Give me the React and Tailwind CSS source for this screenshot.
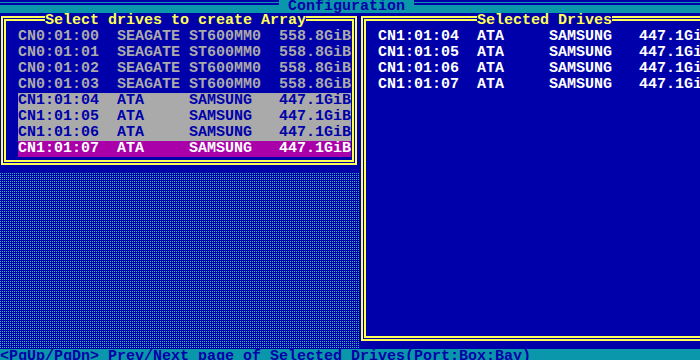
/**
 * App.jsx — RAID configuration screen (VGA text mode look).
 * 80x25 grid: every cell is 9px wide, 16px high.
 */
const arrayDrives = [
  { text: 'CN0:01:00  SEAGATE ST600MM0  558.8GiB', state: 'idle' },
  { text: 'CN0:01:01  SEAGATE ST600MM0  558.8GiB', state: 'idle' },
  { text: 'CN0:01:02  SEAGATE ST600MM0  558.8GiB', state: 'idle' },
  { text: 'CN0:01:03  SEAGATE ST600MM0  558.8GiB', state: 'idle' },
  { text: 'CN1:01:04  ATA     SAMSUNG   447.1GiB', state: 'picked' },
  { text: 'CN1:01:05  ATA     SAMSUNG   447.1GiB', state: 'picked' },
  { text: 'CN1:01:06  ATA     SAMSUNG   447.1GiB', state: 'picked' },
  { text: 'CN1:01:07  ATA     SAMSUNG   447.1GiB', state: 'cursor' },
]

const selected = [
  'CN1:01:04  ATA     SAMSUNG   447.1GiB',
  'CN1:01:05  ATA     SAMSUNG   447.1GiB',
  'CN1:01:06  ATA     SAMSUNG   447.1GiB',
  'CN1:01:07  ATA     SAMSUNG   447.1GiB',
]

const rowStyles = {
  idle: 'text-[#aaaaaa]',
  picked: 'bg-[#aaaaaa] text-[#0000aa]',
  cursor: 'bg-[#aa00aa] text-white',
}

export default function App() {
  return (
    <div className="w-[700px] h-[360px] overflow-hidden flex flex-col bg-[#0000aa] font-['Liberation_Mono',monospace] font-bold text-[15px] leading-[16px]">
      {/* title bar */}
      <header className="h-[13px] shrink-0 flex items-start bg-[#0a97ab]">
        <div className="w-[279px] shrink-0 h-0 border-t-[5px] border-double border-[#0000aa]" />
        <h1 className="px-[9px] h-[13px] leading-[14px] text-[#0000aa] whitespace-pre">Configuration</h1>
        <div className="flex-1 h-0 border-t-[5px] border-double border-[#0000aa]" />
      </header>

      <main className="flex-1 flex min-h-0">
        {/* drive picker + shaded backdrop */}
        <div className="w-[360px] shrink-0 flex flex-col">
          <section className="relative pt-[3px] pl-[1px] pr-[3px] pb-[8px] bg-[#0000aa]">
            <div className="border-[5px] border-double border-[#ffff55] pt-[8px] pb-[3px] pl-[12px] pr-[1px]">
              {arrayDrives.map((d) => (
                <div key={d.text} className={`h-[16px] whitespace-pre ${rowStyles[d.state]}`}>
                  {d.text}
                </div>
              ))}
            </div>
            <h2 className="absolute top-0 left-[45px] bg-[#0000aa] text-[#ffff55] whitespace-pre">
              Select drives to create Array
            </h2>
          </section>
          <div className="flex-1 bg-[#0000aa] bg-[conic-gradient(at_1px_1px,#0000aa_270deg,#2ab8b0_0)] bg-[length:2px_2px]" />
        </div>

        {/* selected drives */}
        <section className="relative w-[360px] shrink-0 flex flex-col pt-[3px] pl-[1px] pr-[3px] pb-[8px] bg-[#0000aa]">
          <div className="flex-1 border-[5px] border-double border-[#ffff55] pt-[8px] pl-[12px]">
            {selected.map((s) => (
              <div key={s} className="h-[16px] whitespace-pre text-white">
                {s}
              </div>
            ))}
          </div>
          <h2 className="absolute top-0 left-[117px] bg-[#0000aa] text-[#ffff55] whitespace-pre">
            Selected Drives
          </h2>
        </section>
      </main>

      {/* help line */}
      <footer className="h-[11px] shrink-0 overflow-hidden bg-[#0a97ab] text-[#0000aa] whitespace-pre">
        {'<PgUp/PgDn> Prev/Next page of Selected Drives(Port:Box:Bay)'}
      </footer>
    </div>
  )
}
